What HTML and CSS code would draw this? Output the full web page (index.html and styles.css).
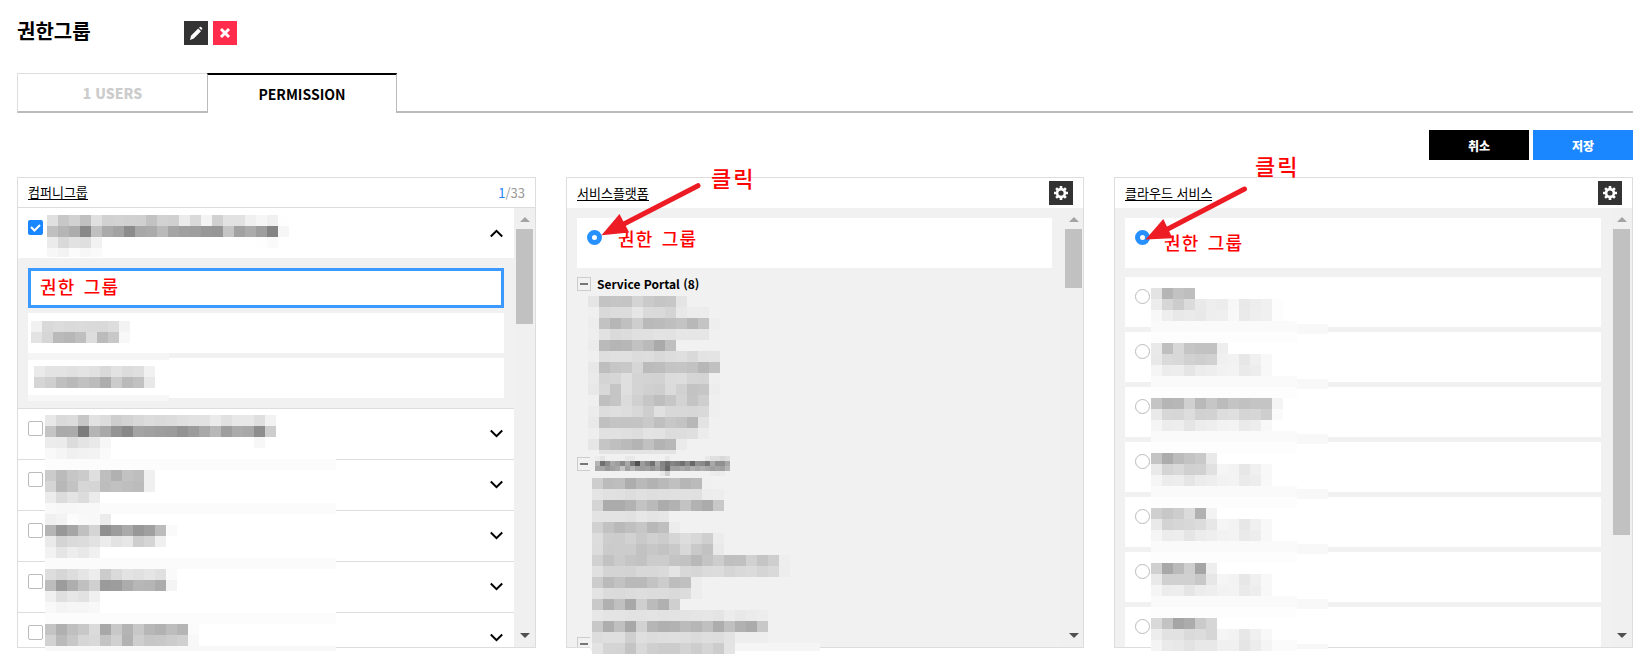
FILE: index.html
```
<!DOCTYPE html>
<html lang="ko">
<head>
    <meta charset="UTF-8">
    <meta name="viewport" content="width=device-width, initial-scale=1.0">
    <title>권한그룹</title>
    <link rel="stylesheet" href="styles.css">
</head>
<body>

<div class="page">
    <div class="header">
        <h1>권한그룹</h1>
        <button class="icon-btn">
            <svg width="24" height="24" viewBox="0 0 24 24"><path d="M6 19l1-4.3 7.2-7.2 2.8 2.8-7.2 7.3zM15 6.700l.9-.8q.6-.4 1.200.1l1 1q.5.6 0 1.200l-.8.9z" fill="#fff"/></svg>
        </button>
        <button class="icon-btn delete">
            <svg width="24" height="24" viewBox="0 0 24 24"><path d="M8 8l8 8M16 8l-8 8" stroke="#fff" stroke-width="2.900"/></svg>
        </button>
    </div>

    <div class="tabs">
        <div class="tab">1 USERS</div>
        <div class="tab active">PERMISSION</div>
        <div class="tab-line"></div>
    </div>

    <div class="actions">
        <button class="btn cancel">취소</button>
        <button class="btn save">저장</button>
    </div>

    <div class="panels">
        <div class="panel">
            <div class="panel-head line">
                <span class="panel-title">컴퍼니그룹</span>
                <span class="count"><b>1</b>/33</span>
            </div>
            <div class="panel-body">
                <div class="list">
                    <div class="row open">
                        <span class="check on"><svg width="15" height="15" viewBox="0 0 15 15"><path d="M3 7l3.500 3.500L12 5" fill="none" stroke="#fff" stroke-width="2"/></svg></span>
                        <svg class="chevron" width="13" height="9" viewBox="0 0 13 9"><path d="M.8 7.500L6.500 1.800l5.700 5.700" fill="none" stroke="#000" stroke-width="2"/></svg>
                    </div>
                    <div class="sub">
                        <div class="sub-item selected">권한 그룹</div>
                        <div class="sub-item"></div>
                        <div class="sub-item"></div>
                    </div>
                    <div id="companies"></div>
                </div>
                <div class="scrollbar"><i class="up"></i><div class="thumb t1"></div><i class="down"></i></div>
            </div>
        </div>

        <div class="panel middle">
            <div class="panel-head">
                <span class="panel-title">서비스플랫폼</span>
                <button class="icon-btn gear"></button>
            </div>
            <div class="panel-body">
                <div class="list cards">
                    <div class="card"><span class="radio on"></span><span class="note n1">권한 그룹</span></div>
                    <div class="tree">
                        <div class="node"><span class="minus"></span>Service Portal (8)</div>
                        <div class="node"><span class="minus"></span></div>
                        <div class="node"><span class="minus"></span></div>
                    </div>
                </div>
                <div class="scrollbar"><i class="up"></i><div class="thumb t2"></div><i class="down"></i></div>
            </div>
        </div>

        <div class="panel">
            <div class="panel-head">
                <span class="panel-title">클라우드 서비스</span>
                <button class="icon-btn gear"></button>
            </div>
            <div class="panel-body">
                <div class="list cards">
                    <div class="card first"><span class="radio on"></span><span class="note n2">권한 그룹</span></div>
                    <div id="services"></div>
                </div>
                <div class="scrollbar"><i class="up"></i><div class="thumb t3"></div><i class="down"></i></div>
            </div>
        </div>
    </div>

    <!-- masked names and click arrows, drawn over the panels -->
    <svg class="overlay" width="1652" height="668" viewBox="0 0 1652 668">
        <g id="mosaic" shape-rendering="crispEdges"></g>
        <g fill="#ed1c24" stroke="#ed1c24" stroke-linecap="round">
            <path d="M698 185.700L620 226" stroke-width="5"/>
            <path d="M601.500 235.200L619.500 214l9.700 18.500z" stroke="none"/>
            <path d="M1244.500 189L1164 231" stroke-width="5"/>
            <path d="M1145.500 239.600L1163.300 219l9.200 19.300z" stroke="none"/>
        </g>
    </svg>
    <span class="click c1">클릭</span>
    <span class="click c2">클릭</span>
</div>

<script src="script.js"></script>
</body>
</html>
```
FILE: styles.css
```
* {
    box-sizing: border-box;
}
body {
    margin: 0;
    background-color: #fff;
    color: #000;
    font-family: "Noto Sans CJK KR", sans-serif;
    font-size: 13px;
}
button {
    border: 0;
    padding: 0;
    font-family: inherit;
}
.page {
    position: relative;
    height: 668px;
    padding: 21px 19px 0 17px;
    overflow: hidden;
}
.header {
    display: flex;
    height: 24px;
}
h1 {
    width: 167px;
    margin: 0;
    font-size: 20px;
    font-weight: bold;
    line-height: 20px;
}
.icon-btn {
    width: 24px;
    height: 24px;
    background-color: #333;
}
.icon-btn svg {
    display: block;
}
.icon-btn.delete {
    margin-left: 5px;
    background-color: #ff2d4b;
}
.tabs {
    display: flex;
    height: 40px;
    margin-top: 28px;
}
.tab {
    width: 190px;
    border: 1px solid #ddd;
    border-right: 0;
    border-bottom: 2px solid #bbb;
    color: #ccc;
    font-size: 14px;
    font-weight: 900;
    line-height: 38px;
    text-align: center;
}
.tab.active {
    border: 1px solid #bbb;
    border-top: 2px solid #000;
    border-bottom: 0;
    color: #000;
    font-weight: bold;
}
.tab-line {
    flex: 1;
    border-bottom: 2px solid #bbb;
}
.actions {
    display: flex;
    justify-content: flex-end;
    gap: 4px;
    margin-top: 17px;
}
.btn {
    width: 100px;
    height: 30px;
    color: #fff;
    font-size: 12px;
    font-weight: 900;
}
.cancel {
    background-color: #000;
}
.save {
    background-color: #1a86ff;
}
.panels {
    display: flex;
    gap: 30px;
    height: 471px;
    margin-top: 17px;
}
.panel {
    display: flex;
    flex-direction: column;
    width: 519px;
    border: 1px solid #ddd;
    overflow: hidden;
}
.panel.middle {
    width: 518px;
}
.panel-head {
    display: flex;
    justify-content: space-between;
    align-items: center;
    height: 30px;
    flex: none;
    padding: 0 10px;
}
.panel-head.line {
    border-bottom: 1px solid #ddd;
}
.panel-head .icon-btn {
    margin-top: -1px;
}
.panel-title {
    border-bottom: 1px solid #000;
    line-height: 14px;
}
.count {
    color: #999;
    font-size: 13px;
}
.count b {
    color: #1a86ff;
    font-weight: normal;
}
.panel-body {
    display: flex;
    flex: 1;
    min-height: 0;
}
.list {
    flex: 1;
    overflow: hidden;
}
.row {
    display: flex;
    justify-content: space-between;
    height: 51px;
    padding: 12px 11px 0 10px;
    border-top: 1px solid #ddd;
}
.row.open {
    height: 50px;
    border-top: 0;
}
.row .chevron {
    margin-top: 8px;
}
.row.open .chevron {
    margin-top: 9px;
}
.check {
    width: 15px;
    height: 15px;
    border: 1px solid #bbb;
    border-radius: 2px;
}
.check.on {
    border: 0;
    background-color: #1a86ff;
}
.check svg {
    display: block;
}
.sub {
    display: flex;
    flex-direction: column;
    gap: 5px;
    padding: 10px;
    background-color: #f1f1f1;
}
.sub-item {
    height: 40px;
    background-color: #fff;
}
.sub-item.selected {
    padding-left: 9px;
    border: 3px solid #3c99ff;
    line-height: 31px;
}
.sub-item.selected,
.note {
    color: #f00;
    font-size: 18px;
    font-weight: 500;
    letter-spacing: 1.200px;
    word-spacing: 2px;
}
.scrollbar {
    display: flex;
    flex-direction: column;
    align-items: center;
    width: 21px;
    padding: 9px 0;
    background-color: #f0f0f0;
}
.middle .scrollbar {
    padding-left: 2px;
}
.up {
    border: 5px solid transparent;
    border-top: 0;
    border-bottom-color: #a3a3a3;
}
.down {
    margin-top: auto;
    border: 5px solid transparent;
    border-bottom: 0;
    border-top-color: #505050;
}
.thumb {
    width: 17px;
    margin-top: 7px;
    background-color: #c1c1c1;
}
.t1 {
    height: 95px;
}
.t2 {
    height: 59px;
}
.t3 {
    height: 306px;
}
.cards {
    padding: 10px 10px 0;
    background-color: #f1f1f1;
}
.card {
    position: relative;
    height: 50px;
    margin-bottom: 5px;
    padding: 12px 10px;
    background-color: #fff;
}
.card.first {
    margin-bottom: 9px;
}
.radio {
    display: block;
    width: 15px;
    height: 15px;
    border: 1px solid #bbb;
    border-radius: 50%;
}
.radio.on {
    border: 5px solid #2690ff;
}
.note {
    position: absolute;
    white-space: nowrap;
    line-height: 20px;
}
.n1 {
    left: 41px;
    top: 10px;
}
.n2 {
    left: 39px;
    top: 14px;
}
.tree {
    padding-top: 4px;
}
.node {
    display: flex;
    height: 180px;
    gap: 6px;
    font-size: 12px;
    font-weight: bold;
    line-height: 14px;
}
.minus {
    display: flex;
    align-items: center;
    justify-content: center;
    width: 14px;
    height: 14px;
    border: 1px solid #ccc;
}
.minus::before {
    content: "";
    width: 8px;
    height: 2px;
    background-color: #777;
}
.overlay {
    position: absolute;
    left: 0;
    top: 0;
}
.click {
    position: absolute;
    color: #f00;
    font-size: 22px;
    font-weight: 500;
    letter-spacing: 2px;
    line-height: 24px;
}
.c1 {
    left: 711px;
    top: 165px;
}
.c2 {
    left: 1255px;
    top: 153px;
}
```
FILE: script.js
```
const gear = `<svg width="24" height="24" viewBox="0 0 24 24">
    <g stroke="#fff" fill="none"><circle cx="12" cy="12" r="3.900" stroke-width="2.600"/>
    <path d="M12 5v3M12 16v3M5 12h3M16 12h3M7.100 7.100l2 2M14.900 14.900l2 2M16.900 7.100l-2 2M9.100 14.900l-2 2" stroke-width="2.600"/></g></svg>`;
document.querySelectorAll('.gear').forEach(button => button.innerHTML = gear);

const chevron = '<svg class="chevron" width="13" height="9" viewBox="0 0 13 9"><path d="M.8 1.500l5.700 5.700 5.700-5.700" fill="none" stroke="#000" stroke-width="2"/></svg>';
document.getElementById('companies').innerHTML = `<div class="row"><span class="check"></span>${chevron}</div>`.repeat(5);
document.getElementById('services').innerHTML = '<div class="card"><span class="radio"></span></div>'.repeat(7);

const mosaic = document.getElementById('mosaic');

function rect(x, y, w, h, color) {
    const cell = document.createElementNS('http://www.w3.org/2000/svg', 'rect');
    cell.setAttribute('x', x);
    cell.setAttribute('y', y);
    cell.setAttribute('width', w);
    cell.setAttribute('height', h);
    cell.setAttribute('fill', color);
    mosaic.appendChild(cell);
}

// each row is a list of grey levels, ".." leaves a cell empty
function block(x, y, rows, size = 11) {
    rows.forEach((row, r) => {
        row.split(' ').forEach((v, c) => {
            if (v !== '..') rect(x + c * size, y + r * size, size, size, '#' + v + v + v);
        });
    });
}

// company groups
block(47, 215, [
    'e0 c7 d1 c0 e0 d1 d3 d1 d0 c2 d2 d0 ec da f4 d1 e2 e2 f0 f6 f0 fe',
    'c0 b5 ac 88 c0 aa a3 8c a8 ab ba a5 a0 9e 98 96 c5 a2 ac 9e 84 f6',
    'eb d9 e2 df f2 .. .. .. .. .. .. .. .. .. .. .. .. .. .. fe fa'
]);
['f7', 'f3', 'fb', 'f7', 'fa'].forEach((v, i) => rect(47 + i * 11, 248, 11, 9, '#' + v + v + v));
rect(28, 353, 141, 7, '#f5f5f5');
rect(28, 395, 141, 6, '#f7f7f7');
block(31, 321, ['f1 d9 dc da db da d9 dd f3', 'e3 d6 ba b7 bf dd bb c8 f8']);
block(34, 366, ['ea e3 e3 e1 e4 e1 d9 e2 dc df f1', 'd5 cf bf b9 c1 bc ad cb ba c1 e8']);
rect(45, 415, 291, 236, '#fff');
rect(45, 459, 291, 11, '#fcfcfc');
rect(45, 503, 291, 11, '#fbfbfb');
rect(45, 558, 291, 11, '#fbfbfb');
rect(45, 613, 291, 11, '#fcfcfc');
rect(45, 646, 291, 5, '#f8f8f8');
block(45, 415, [
    'e8 da dc c7 e2 dc ce d3 d8 dc da dc e0 e2 e2 eb e1 e8 e8 df f2',
    'c4 aa ab 7c b5 a8 94 88 a4 a1 9e 9c 93 9c a8 b8 9e ab a8 8e cd',
    'ec eb dc e4 e9 f6 .. .. .. .. .. .. .. .. .. .. .. .. .. f7',
    'f9 f5 f0 f2 f3 fa'
]);
block(45, 470, [
    'cb bb c6 cb df be b1 c2 be f0',
    'd5 b8 c3 d6 d5 bd c1 be bc f0',
    'ec dc e4 dc eb',
    'f9 f7 f7 f8 f8',
    'f0 f3 fc f9 f8 ec',
    'b5 98 a6 c0 d4 90 9c aa 98 a0 bc fa',
    'ea d4 da dc e2 ec e3 e7 ce d5 f0',
    'f2 e5 ed e8 f0'
]);
block(45, 569, [
    'dd d6 dd e5 ed cc da e3 e0 e5 e0 fa',
    'bc 9c ae c0 d0 9b 9d ac b7 b5 ac f4',
    'f0 df e6 e2 f0',
    'f9 f4 f6 f6 f8'
]);
block(45, 624, [
    'c4 b0 bf c8 db a8 c8 b4 c8 b7 b2 bd b5 fb',
    'd2 ba c7 d6 d9 c4 d0 b2 ce c6 c8 cc d0 f8'
]);

// service platforms
block(588, 296, [
    'e5 c3 c5 c4 d4 ca c5 c7 e4',
    'ef d9 dc dc e6 da d9 d4 e8 ec ec',
    'ed c2 b6 c0 ce b9 bb bf c3 b8 c4 ee',
    'ee e2 da dc e0 e0 e3 e2 e6 e6 e6 f0',
    'eb ba b5 b7 c2 ba aa bf',
    'ef de e0 e0 dc dd d9 dd df d9 e3 e4',
    'e8 be c6 c8 d6 bb bd c4 c5 c2 b7 c1',
    'ea d4 d6 df d4 d3 d2 dc dd d5 d4 ef',
    'e8 d8 c5 df d4 d0 ce db d1 c3 c6 ed',
    'ef bf c5 db d0 c6 be c6 d3 c4 ce ef',
    'ec dd df dd d8 ce e0 d8 d8 d7 d9 ef',
    'e9 c0 c4 c3 c4 c9 bf c7 c3 b7 e3',
    'ee e1 e1 df dd e3 e2 dc dd df ec',
    'e6 c5 bf ba b4 c1 b3 b8 ea'
]);
rect(599, 450, 77, 4, '#e3e3e3');
rect(590, 455, 5, 18, '#f1f1f1');
block(595, 456, [
    'ec e4 f0 f0 f0 f0 e8 e8 .. .. .. .. .. .. e8 .. .. .. .. .. .. .. e8 df df d8 df',
    'b5 70 8a a8 9e 88 a8 78 50 9c 88 70 a8 84 70 84 7c 70 8a 68 90 8a 78 a8 90 90 a8',
    'a8 a8 98 a0 a8 c4 a0 b4 a0 9c a0 94 a0 88 68 a0 a0 a8 a0 b0 a8 b0 a8 a0 a4 a0 b4',
    '.. .. .. .. .. .. .. .. .. .. .. .. .. e8 d0 .. .. .. .. .. .. .. .. ec ea ec'
], 5);
rect(590, 636, 6, 12, '#f1f1f1');
rect(590, 643, 230, 8, '#f5f5f5');
block(592, 478, [
    'cd bb be ad b9 b2 b9 c0 b6 bb f0',
    'e4 e1 e0 dd e0 de df e0 e1 e0 ec ed',
    'd4 ab ab b2 c3 ba ac b2 c3 b2 ab c8',
    'e3 e3 e3 e1 e7 e4 e6',
    'd1 c2 b9 bf c6 b8 bf ec',
    'dd cd cc d2 c9 d0 cc d5 dd d8 cf ec',
    'dc cb cc cc c2 c7 c3 c9 d8 c9 c2 e9',
    'd1 c2 cb c5 c2 cc cc c4 c2 b8 c4 cd bf c0 d1 c5 ce ee',
    'e0 d4 d4 d3 d8 d8 da e4 d8 d6 db dc d5 d9 db d5 d9 ed',
    'cc ba c2 b9 b9 c3 cc bd c0 ed',
    'e3 db da dc de dc dc da dc ed',
    'c9 b0 c0 a8 cf bb b0 cf',
    'e7 e4 e4 e2 e2 e3 e2 e3 e3 e5 e6 e4 ec e8 eb ed',
    'c8 ae c0 a8 d2 b6 b0 b2 bb b6 c0 ad c0 b1 ab c8',
    'dd df df cf df dc de df de db de dd e3 ee ee ee',
    'e3 d5 d4 c4 d9 cf cc cc d3 cd d5 cc e4'
]);

// cloud services
const tail = 'f5 ec ed e5 ec ee f2 f3 ea ed f8';
const names = [
    ['e3 b5 c2 be', 'ec d6 cc db e9 ee ec f7 e9 ed f0 fd', 'f8 ee e8 ea e8 ee ef f8 ea ee f0 fd'],
    ['e9 bf d8 c5 c2 c2 ee', 'e8 da d8 d1 ce d1 f0 f2 e7 f0 f8', tail],
    ['c4 b5 b7 d0 b9 c6 bb c4 c1 c4 c4 f4', 'e9 d7 d6 dd d1 d2 dd df d5 d6 ce fa', tail],
    ['c4 ac bb c3 c9 e9', 'e9 d4 d9 d0 d1 e1 f5 f3 e7 f0 f8', tail],
    ['cf c7 cd db b1 f3', 'e9 d3 d6 d8 dc e7 f5 f3 e7 f0 f8', tail],
    ['d0 a8 ba ce a5 ee', 'e9 d0 d0 d0 c8 e7 f5 f3 e7 f0 f8', tail],
    ['d9 c3 a5 ac ca d6', 'ed e2 e2 da dc d6 f5 f3 e7 f0 f8', 'f4 ea e8 e3 e8 e8 f0 f0 e5 ec f4']
];
names.forEach((rows, i) => {
    const y = 288 + i * 55;
    if (i < 6) {
        rect(1151, y + 33, 146, 11, '#fafafa');
        rect(1151, y + 44, 146, 11, '#fdfdfd');
        rect(1297, y + 36, 31, 10, '#f8f8f8');
    } else {
        rect(1151, y + 22, 146, 11, '#fbfbfb');
        rect(1297, y + 26, 31, 5, '#f7f7f7');
    }
    block(1151, y, rows);
});
```
